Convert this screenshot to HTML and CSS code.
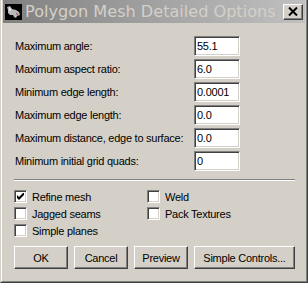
FILE: index.html
```html
<!DOCTYPE html>
<html>
<head>
<meta charset="utf-8">
<link rel="stylesheet" href="styles.css">
</head>
<body>
<div class="window">
  <div class="frame">
    <div class="titlebar">
      <svg class="app-icon" width="17" height="16" viewBox="0 0 17 16">
        <rect width="17" height="16" fill="#000"/>
        <path d="M2 3 L5 2 L7 5 L11 6 L14 8 L15 11 L12 12 L11 14 L9 13 L8 11 L5 11 L3 9 L3 6 Z" fill="#b8b8b8"/>
        <path d="M4 4 L6 5 L5 8 Z" fill="#fff"/>
        <path d="M11 9 L13 10 L12 11 Z" fill="#a00"/>
      </svg>
      <span class="title">Polygon Mesh Detailed Options</span>
      <div class="close-btn">
        <svg width="10" height="9" viewBox="0 0 10 9">
          <path d="M1 0.5 L9 8.5 M9 0.5 L1 8.5" stroke="#000" stroke-width="2"/>
        </svg>
      </div>
    </div>
    <div class="content">
      <div class="fields">
        <label class="lbl">Maximum angle:</label><input class="txt" value="55.1">
        <label class="lbl">Maximum aspect ratio:</label><input class="txt" value="6.0">
        <label class="lbl">Minimum edge length:</label><input class="txt" value="0.0001">
        <label class="lbl">Maximum edge length:</label><input class="txt" value="0.0">
        <label class="lbl">Maximum distance, edge to surface:</label><input class="txt" value="0.0">
        <label class="lbl">Minimum initial grid quads:</label><input class="txt" value="0">
      </div>
      <div class="separator"></div>
      <div class="checks">
        <div class="chk"><span class="box checked"><svg width="7" height="7" viewBox="0 0 7 7"><path d="M0 2 L0 5 L2 7 L7 2 L7 -1 L2 4 Z" fill="#000"/></svg></span><span>Refine mesh</span></div>
        <div class="chk"><span class="box"></span><span>Weld</span></div>
        <div class="chk"><span class="box"></span><span>Jagged seams</span></div>
        <div class="chk"><span class="box"></span><span>Pack Textures</span></div>
        <div class="chk"><span class="box"></span><span>Simple planes</span></div>
      </div>
      <div class="buttons">
        <div class="btn w54">OK</div>
        <div class="btn w54">Cancel</div>
        <div class="btn w54">Preview</div>
        <div class="btn w101">Simple Controls...</div>
      </div>
    </div>
  </div>
</div>
</body>
</html>
```

FILE: styles.css
```css
html, body {
  margin: 0;
  padding: 0;
  background: #d4d0c8;
}
.window {
  width: 308px;
  height: 283px;
  box-sizing: border-box;
  border-style: solid;
  border-width: 0 1px 1px 1px;
  border-color: #d4d0c8 #404040 #404040 #d4d0c8;
  background: #d4d0c8;
}
.frame {
  height: 100%;
  box-sizing: border-box;
  border-style: solid;
  border-width: 0 1px 1px 1px;
  border-color: #fff #808080 #808080 #fff;
  padding: 0 1px 1px 1px;
  display: flex;
  flex-direction: column;
}
.titlebar {
  height: 23px;
  background: linear-gradient(to right, #808080 0%, #a8a8a8 60%, #c0c0c0 100%);
  display: flex;
  align-items: center;
  padding: 0 2px 0 2px;
  box-sizing: border-box;
}
.app-icon {
  flex: none;
  margin-right: 3px;
}
.title {
  font-family: "DejaVu Sans", sans-serif;
  font-size: 16.1px;
  color: #d4d0c8;
  white-space: nowrap;
  line-height: 23px;
}
.close-btn {
  margin-left: auto;
  width: 20px;
  height: 16px;
  box-sizing: border-box;
  background: #d4d0c8;
  border: 1px solid;
  border-color: #fff #404040 #404040 #fff;
  box-shadow: inset -1px -1px 0 #808080;
  display: flex;
  align-items: center;
  justify-content: center;
  padding-right: 1px;
}
.content {
  padding: 13px 10px 0 11px;
  font-family: "Liberation Sans", Arial, sans-serif;
  font-size: 11px;
  letter-spacing: -0.25px;
  color: #000;
}
.fields {
  display: grid;
  grid-template-columns: 180px 46px;
  row-gap: 3px;
  align-items: center;
}
.lbl {
  padding-left: 1px;
  white-space: nowrap;
}
.txt {
  width: 46px;
  height: 20px;
  box-sizing: border-box;
  margin: 0;
  padding: 0 0 0 2px;
  border: 1px solid;
  border-color: #808080 #fff #fff #808080;
  box-shadow: inset 1px 1px 0 #404040, inset -1px -1px 0 #d4d0c8;
  background: #fff;
  font-family: "Liberation Sans", Arial, sans-serif;
  font-size: 11px;
  letter-spacing: -0.25px;
  color: #000;
  outline: none;
}
.separator {
  margin-top: 8px;
  border-top: 1px solid #808080;
  border-bottom: 1px solid #fff;
  height: 0;
}
.checks {
  margin-top: 9px;
  display: grid;
  grid-template-columns: 133px 1fr;
  row-gap: 4px;
}
.chk {
  display: flex;
  align-items: center;
  height: 13px;
  gap: 5px;
  white-space: nowrap;
}
.box {
  width: 13px;
  height: 13px;
  box-sizing: border-box;
  border: 1px solid;
  border-color: #808080 #fff #fff #808080;
  box-shadow: inset 1px 1px 0 #404040, inset -1px -1px 0 #d4d0c8;
  background: #fff;
  flex: none;
  display: flex;
  align-items: center;
  justify-content: center;
}
.buttons {
  margin-top: 9px;
  display: flex;
  gap: 6px;
}
.btn {
  height: 23px;
  box-sizing: border-box;
  border: 1px solid;
  border-color: #fff #404040 #404040 #fff;
  box-shadow: inset -1px -1px 0 #808080;
  background: #d4d0c8;
  display: flex;
  align-items: center;
  justify-content: center;
  white-space: nowrap;
}
.w54 { width: 54px; }
.w101 { width: 101px; }
```
